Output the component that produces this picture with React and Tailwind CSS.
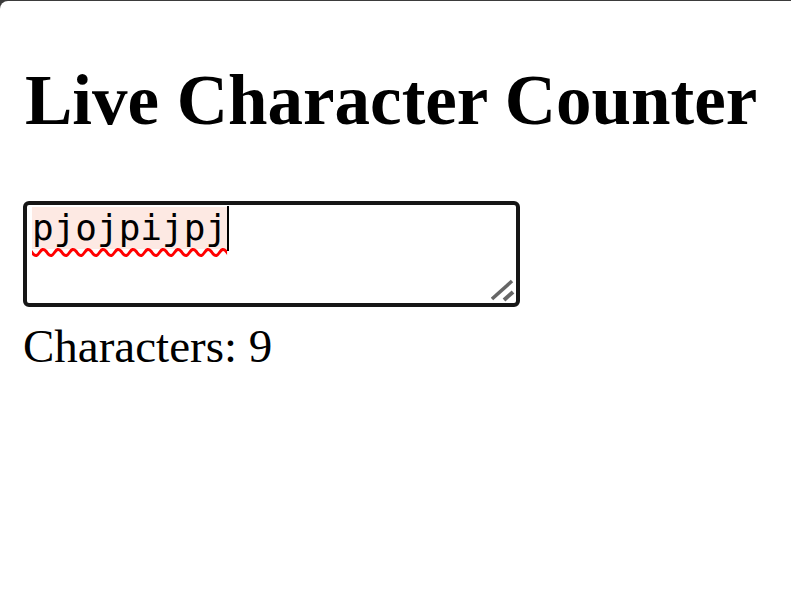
import React, { useState } from 'react';

const ResizeHandle = () => (
  <svg width="24" height="24" viewBox="0 0 24 24" className="absolute right-[1px] bottom-[1px]">
    <line x1="1" y1="21" x2="21" y2="3" stroke="#666666" strokeWidth="3.5" />
    <line x1="13" y1="22" x2="22" y2="14" stroke="#666666" strokeWidth="4" />
  </svg>
);

const App = () => {
  const [text] = useState('pjojpijpj');

  return (
    <div className="min-h-screen bg-[#3b3b3b] pt-px">
      <div className="min-h-[615px] bg-white rounded-tl-[8px] px-[23px] pt-[58px] font-['Liberation_Serif',serif] text-black">
        {/* Title */}
        <h1 className="text-[71px] leading-[82px] font-bold pl-[2px]">Live Character Counter</h1>

        {/* Text box */}
        <div className="relative mt-[60px] w-[497px] h-[106px] border-4 border-[#161616] rounded-[6px] pl-[5px] pt-[2px]">
          <div className="flex items-start font-['DejaVu_Sans_Mono',monospace] text-[36px] leading-[42px]">
            <span className="bg-[#fde9e3] underline decoration-wavy decoration-[#ff0000] decoration-[3px] underline-offset-[8px]">
              {text}
            </span>
            <span className="w-[2px] h-[45px] bg-black -mt-[1px]"></span>
          </div>
          <ResizeHandle />
        </div>

        {/* Counter */}
        <p className="mt-[12px] text-[47px] leading-[54px]">Characters: {text.length}</p>
      </div>
    </div>
  );
};

export default App;
